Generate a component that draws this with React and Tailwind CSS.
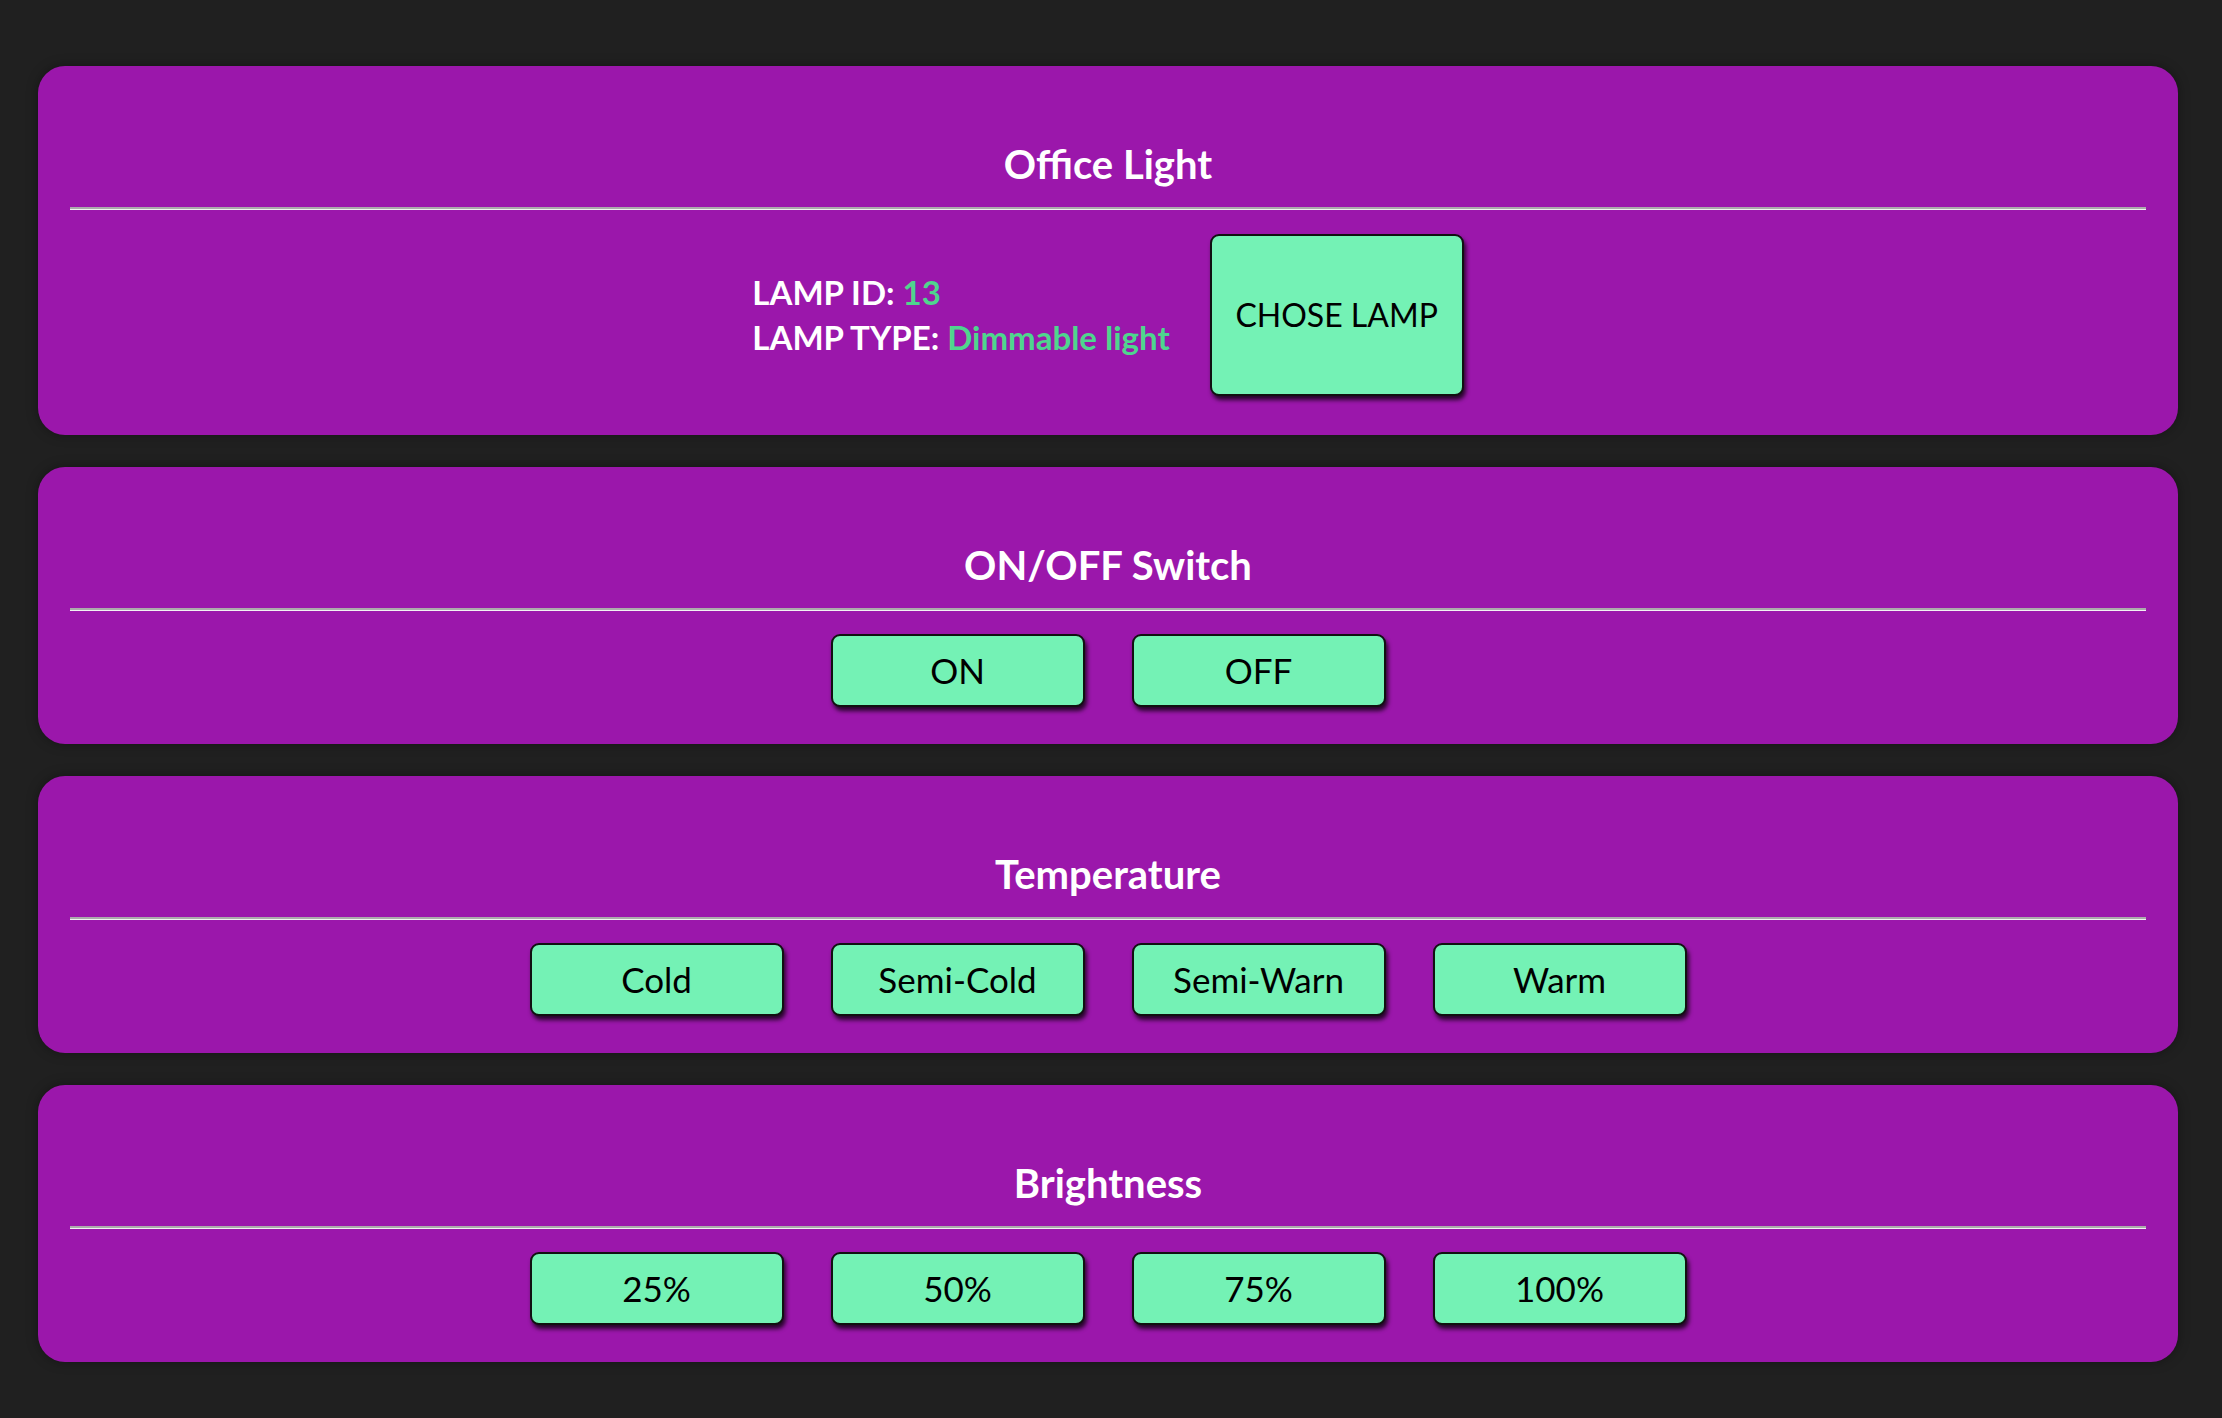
import React from "react";

const temperatures = ["Cold", "Semi-Cold", "Semi-Warn", "Warm"];
const levels = ["25%", "50%", "75%", "100%"];

function Divider() {
  return (
    <div className="mt-[20px] h-[3px] border-t-2 border-b border-t-[#ababab] border-b-[#f2f2f2]" />
  );
}

function Card({ title, children }) {
  return (
    <section className="rounded-[27px] bg-[#9b17ab] px-8 pt-[75px] pb-[37px] shadow-[0_0_12px_rgba(0,0,0,0.35)]">
      <h2 className="h-[46px] text-center text-[40px] font-bold leading-[46px] text-white">
        {title}
      </h2>
      <Divider />
      {children}
    </section>
  );
}

function LampButton({ label, tall = false }) {
  return (
    <button
      type="button"
      className={`w-[254px] rounded-[9px] border-2 border-[#111] bg-[#74f2b5] text-black shadow-[2px_4px_4px_rgba(0,0,0,0.75)] ${
        tall ? "h-[162px] text-[32px]" : "h-[73px] text-[35px]"
      }`}
      style={{ fontFamily: "Lato, 'Open Sans', sans-serif" }}
    >
      {label}
    </button>
  );
}

function ButtonRow({ items }) {
  return (
    <div className="mt-[23px] flex justify-center gap-[47px]">
      {items.map((item) => (
        <LampButton key={item} label={item} />
      ))}
    </div>
  );
}

export default function App() {
  return (
    <div
      className="min-h-screen bg-[#202020] pt-[66px] pr-[44px] pb-[54px] pl-[38px]"
      style={{ fontFamily: "Lato, 'Open Sans', sans-serif" }}
    >
      <div className="flex flex-col gap-[32px]">
        <Card title="Office Light">
          <div className="mt-[24px] mb-[2px] flex items-center justify-center gap-[40px]">
            <div className="text-[33px] font-bold leading-[45px] text-white">
              <div>
                LAMP ID: <span className="text-[#4fd58e]">13</span>
              </div>
              <div>
                LAMP TYPE: <span className="text-[#4fd58e]">Dimmable light</span>
              </div>
            </div>
            <LampButton label="CHOSE LAMP" tall />
          </div>
        </Card>

        <Card title="ON/OFF Switch">
          <ButtonRow items={["ON", "OFF"]} />
        </Card>

        <Card title="Temperature">
          <ButtonRow items={temperatures} />
        </Card>

        <Card title="Brightness">
          <ButtonRow items={levels} />
        </Card>
      </div>
    </div>
  );
}
